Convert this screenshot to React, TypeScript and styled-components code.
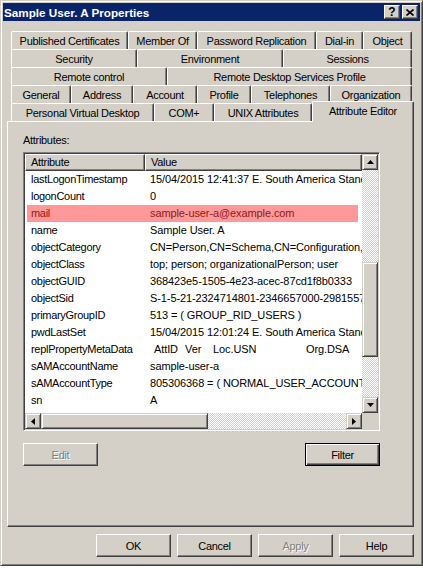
import React from 'react'
import styled, { createGlobalStyle } from 'styled-components'

const GlobalStyle = createGlobalStyle`
  html, body {
    margin: 0;
    padding: 0;
    background: #ffffff;
  }
  body {
    font-family: "Liberation Sans", Arial, sans-serif;
    font-size: 11px;
    letter-spacing: -0.3px;
    color: #000;
  }
  * {
    box-sizing: border-box;
  }
`

const Window = styled.div`
  width: 423px;
  height: 566px;
  background: #d4d0c8;
  border: 1px solid;
  border-color: #d4d0c8 #404040 #404040 #d4d0c8;
  box-shadow: inset 1px 1px #ffffff, inset -1px -1px #808080;
  padding: 2px;
  display: flex;
  flex-direction: column;
`

const TitleBar = styled.div`
  height: 18px;
  background: #0a246a;
  display: flex;
  align-items: center;
  padding: 0 2px 0 1px;
`

const Title = styled.div`
  flex: 1;
  color: #fff;
  font-weight: bold;
  font-size: 11.7px;
  letter-spacing: 0;
`

const Caption = styled.button`
  width: 16px;
  height: 14px;
  margin-left: 2px;
  padding: 0;
  background: #d4d0c8;
  border: 1px solid;
  border-color: #fff #404040 #404040 #fff;
  box-shadow: inset -1px -1px #808080;
  display: flex;
  align-items: center;
  justify-content: center;
  font-family: "Liberation Sans", Arial, sans-serif;
  font-weight: bold;
  font-size: 12px;
  line-height: 12px;
  color: #000;
`

const Content = styled.div`
  flex: 1;
  display: flex;
  flex-direction: column;
  padding-top: 10px;
`

const TabStrip = styled.div`
  margin-left: 8px;
  display: flex;
  flex-direction: column;
`

const TabRow = styled.div`
  display: flex;
  height: 18px;
`

const Tab = styled.div<{ $w: number }>`
  width: ${(p) => p.$w}px;
  height: 18px;
  flex: none;
  border-top: 1px solid #fff;
  border-left: 1px solid #fff;
  border-right: 1px solid #404040;
  border-radius: 2px 2px 0 0;
  box-shadow: inset -1px 0 #808080;
  display: flex;
  align-items: center;
  justify-content: center;
  padding-top: 1px;
  white-space: nowrap;
`

const ActiveTab = styled(Tab)`
  height: 21px;
  margin-top: -2px;
  padding: 0 0 3px;
  background: #d4d0c8;
  position: relative;
  z-index: 2;
`

const Panel = styled.div`
  margin-left: 4px;
  width: 407px;
  height: 406px;
  border-top: 1px solid #fff;
  border-left: 1px solid #fff;
  border-right: 1px solid #404040;
  border-bottom: 1px solid #404040;
  box-shadow: inset -1px -1px #808080;
  padding: 12px 0 0 15px;
  display: flex;
  flex-direction: column;
`

const Label = styled.div`
  height: 13px;
  line-height: 13px;
`

const ListBox = styled.div`
  margin-top: 5px;
  width: 357px;
  height: 279px;
  background: #fff;
  border: 1px solid;
  border-color: #808080 #fff #fff #808080;
  box-shadow: inset 1px 1px #404040, inset -1px -1px #d4d0c8;
  padding: 1px;
  display: grid;
  grid-template-columns: 1fr 16px;
  grid-template-rows: 1fr 16px;
`

const ListView = styled.div`
  overflow: hidden;
  display: flex;
  flex-direction: column;
`

const Header = styled.div`
  display: flex;
  height: 17px;
  flex: none;
`

const HeaderCell = styled.div<{ $w: number }>`
  width: ${(p) => p.$w}px;
  flex: none;
  height: 17px;
  background: #d4d0c8;
  border: 1px solid;
  border-color: #fff #404040 #404040 #fff;
  box-shadow: inset -1px -1px #808080;
  padding-left: 5px;
  line-height: 14px;
`

const Row = styled.div<{ $hl?: boolean }>`
  display: flex;
  margin-left: 2px;
  width: 331px;
  height: 17px;
  flex: none;
  line-height: 17px;
  white-space: nowrap;
  background: ${(p) => (p.$hl ? '#ff9999' : 'transparent')};
  color: ${(p) => (p.$hl ? '#8a1c1c' : '#000')};
`

const AttrCell = styled.div`
  width: 118px;
  flex: none;
  padding-left: 4px;
  overflow: hidden;
`

const ValueCell = styled.div`
  flex: none;
  padding-left: 5px;
  display: flex;
  letter-spacing: -0.1px;
`

const Tabbed = styled.span<{ $w: number }>`
  display: inline-block;
  width: ${(p) => p.$w}px;
`

const VScroll = styled.div`
  display: flex;
  flex-direction: column;
`

const HScroll = styled.div`
  display: flex;
`

const Track = styled.div<{ $vertical?: boolean }>`
  flex: 1;
  display: flex;
  flex-direction: ${(p) => (p.$vertical ? 'column' : 'row')};
  background: repeating-conic-gradient(#d4d0c8 0 25%, #ffffff 0 50%) 0 0 / 2px 2px;
`

const Thumb = styled.div<{ $offset: number; $size: number; $vertical?: boolean }>`
  flex: none;
  ${(p) =>
    p.$vertical
      ? `margin-top: ${p.$offset}px; height: ${p.$size}px; width: 16px;`
      : `margin-left: ${p.$offset}px; width: ${p.$size}px; height: 16px;`}
  background: #d4d0c8;
  border: 1px solid;
  border-color: #d4d0c8 #404040 #404040 #d4d0c8;
  box-shadow: inset 1px 1px #fff, inset -1px -1px #808080;
`

const ArrowButton = styled.div`
  width: 16px;
  height: 16px;
  flex: none;
  background: #d4d0c8;
  border: 1px solid;
  border-color: #d4d0c8 #404040 #404040 #d4d0c8;
  box-shadow: inset 1px 1px #fff, inset -1px -1px #808080;
  display: flex;
  align-items: center;
  justify-content: center;
`

const Corner = styled.div`
  background: #d4d0c8;
`

const PanelButtons = styled.div`
  margin-top: 12px;
  width: 357px;
  display: flex;
  justify-content: space-between;
`

const Button = styled.button<{ $default?: boolean }>`
  width: 75px;
  height: 23px;
  padding: 0;
  background: #d4d0c8;
  font-family: "Liberation Sans", Arial, sans-serif;
  font-size: 11px;
  letter-spacing: -0.3px;
  color: #000;
  border: 1px solid;
  border-color: ${(p) => (p.$default ? '#000' : '#fff #404040 #404040 #fff')};
  box-shadow: ${(p) =>
    p.$default
      ? 'inset 1px 1px #fff, inset -1px -1px #404040, inset -2px -2px #808080'
      : 'inset -1px -1px #808080'};
  &:disabled {
    color: #808080;
    text-shadow: 1px 1px #fff;
  }
`

const DialogButtons = styled.div`
  margin-top: 7px;
  padding-right: 6px;
  display: flex;
  justify-content: flex-end;
  gap: 6px;
`

const Arrow = ({ dir }: { dir: 'up' | 'down' | 'left' | 'right' }) => {
  const pts = {
    up: '3.5,0 7,4 0,4',
    down: '0,0 7,0 3.5,4',
    left: '4,0 4,7 0,3.5',
    right: '0,0 0,7 4,3.5',
  }[dir]
  const vertical = dir === 'up' || dir === 'down'
  return (
    <svg width={vertical ? 7 : 4} height={vertical ? 4 : 7} viewBox={vertical ? '0 0 7 4' : '0 0 4 7'}>
      <polygon points={pts} fill="#000" />
    </svg>
  )
}

const rows: [string, React.ReactNode, boolean?][] = [
  ['lastLogonTimestamp', '15/04/2015 12:41:37 E. South America Standard Time'],
  ['logonCount', '0'],
  ['mail', 'sample-user-a@example.com', true],
  ['name', 'Sample User. A'],
  ['objectCategory', 'CN=Person,CN=Schema,CN=Configuration,DC=example,DC=com'],
  ['objectClass', 'top; person; organizationalPerson; user'],
  ['objectGUID', '368423e5-1505-4e23-acec-87cd1f8b0333'],
  ['objectSid', 'S-1-5-21-2324714801-2346657000-2981557124-1105'],
  ['primaryGroupID', '513 = ( GROUP_RID_USERS )'],
  ['pwdLastSet', '15/04/2015 12:01:24 E. South America Standard Time'],
  [
    'replPropertyMetaData',
    <>
      <Tabbed $w={4} />
      <Tabbed $w={31}>AttID</Tabbed>
      <Tabbed $w={28}>Ver</Tabbed>
      <Tabbed $w={93}>Loc.USN</Tabbed>
      <span>Org.DSA</span>
    </>,
  ],
  ['sAMAccountName', 'sample-user-a'],
  ['sAMAccountType', '805306368 = ( NORMAL_USER_ACCOUNT )'],
  ['sn', 'A'],
  ['userAccountControl', '0x200 = ( NORMAL_ACCOUNT )'],
]

const App = () => {
  return (
    <>
      <GlobalStyle />
      <Window>
        <TitleBar>
          <Title>Sample User. A Properties</Title>
          <Caption>?</Caption>
          <Caption>
            <svg width="8" height="7" viewBox="0 0 8 7">
              <path d="M0.5 0.5 L7.5 6.5 M7.5 0.5 L0.5 6.5" stroke="#000" strokeWidth="1.6" />
            </svg>
          </Caption>
        </TitleBar>
        <Content>
          <TabStrip>
            <TabRow>
              <Tab $w={117}>Published Certificates</Tab>
              <Tab $w={69}>Member Of</Tab>
              <Tab $w={119}>Password Replication</Tab>
              <Tab $w={47}>Dial-in</Tab>
              <Tab $w={49}>Object</Tab>
            </TabRow>
            <TabRow>
              <Tab $w={126}>Security</Tab>
              <Tab $w={146}>Environment</Tab>
              <Tab $w={129}>Sessions</Tab>
            </TabRow>
            <TabRow>
              <Tab $w={156}>Remote control</Tab>
              <Tab $w={245}>Remote Desktop Services Profile</Tab>
            </TabRow>
            <TabRow>
              <Tab $w={60}>General</Tab>
              <Tab $w={62}>Address</Tab>
              <Tab $w={64}>Account</Tab>
              <Tab $w={54}>Profile</Tab>
              <Tab $w={79}>Telephones</Tab>
              <Tab $w={82}>Organization</Tab>
            </TabRow>
            <TabRow>
              <Tab $w={143}>Personal Virtual Desktop</Tab>
              <Tab $w={60}>COM+</Tab>
              <Tab $w={98}>UNIX Attributes</Tab>
              <ActiveTab $w={102}>Attribute Editor</ActiveTab>
            </TabRow>
          </TabStrip>
          <Panel>
            <Label>Attributes:</Label>
            <ListBox>
              <ListView>
                <Header>
                  <HeaderCell $w={120}>Attribute</HeaderCell>
                  <HeaderCell $w={217}>Value</HeaderCell>
                </Header>
                {rows.map(([attr, value, hl]) => (
                  <Row key={attr} $hl={hl}>
                    <AttrCell>{attr}</AttrCell>
                    <ValueCell>{value}</ValueCell>
                  </Row>
                ))}
              </ListView>
              <VScroll>
                <ArrowButton>
                  <Arrow dir="up" />
                </ArrowButton>
                <Track $vertical>
                  <Thumb $vertical $offset={92} $size={95} />
                </Track>
                <ArrowButton>
                  <Arrow dir="down" />
                </ArrowButton>
              </VScroll>
              <HScroll>
                <ArrowButton>
                  <Arrow dir="left" />
                </ArrowButton>
                <Track>
                  <Thumb $offset={0} $size={167} />
                </Track>
                <ArrowButton>
                  <Arrow dir="right" />
                </ArrowButton>
              </HScroll>
              <Corner />
            </ListBox>
            <PanelButtons>
              <Button disabled>Edit</Button>
              <Button $default>Filter</Button>
            </PanelButtons>
          </Panel>
          <DialogButtons>
            <Button>OK</Button>
            <Button>Cancel</Button>
            <Button disabled>Apply</Button>
            <Button>Help</Button>
          </DialogButtons>
        </Content>
      </Window>
    </>
  )
}

export default App
